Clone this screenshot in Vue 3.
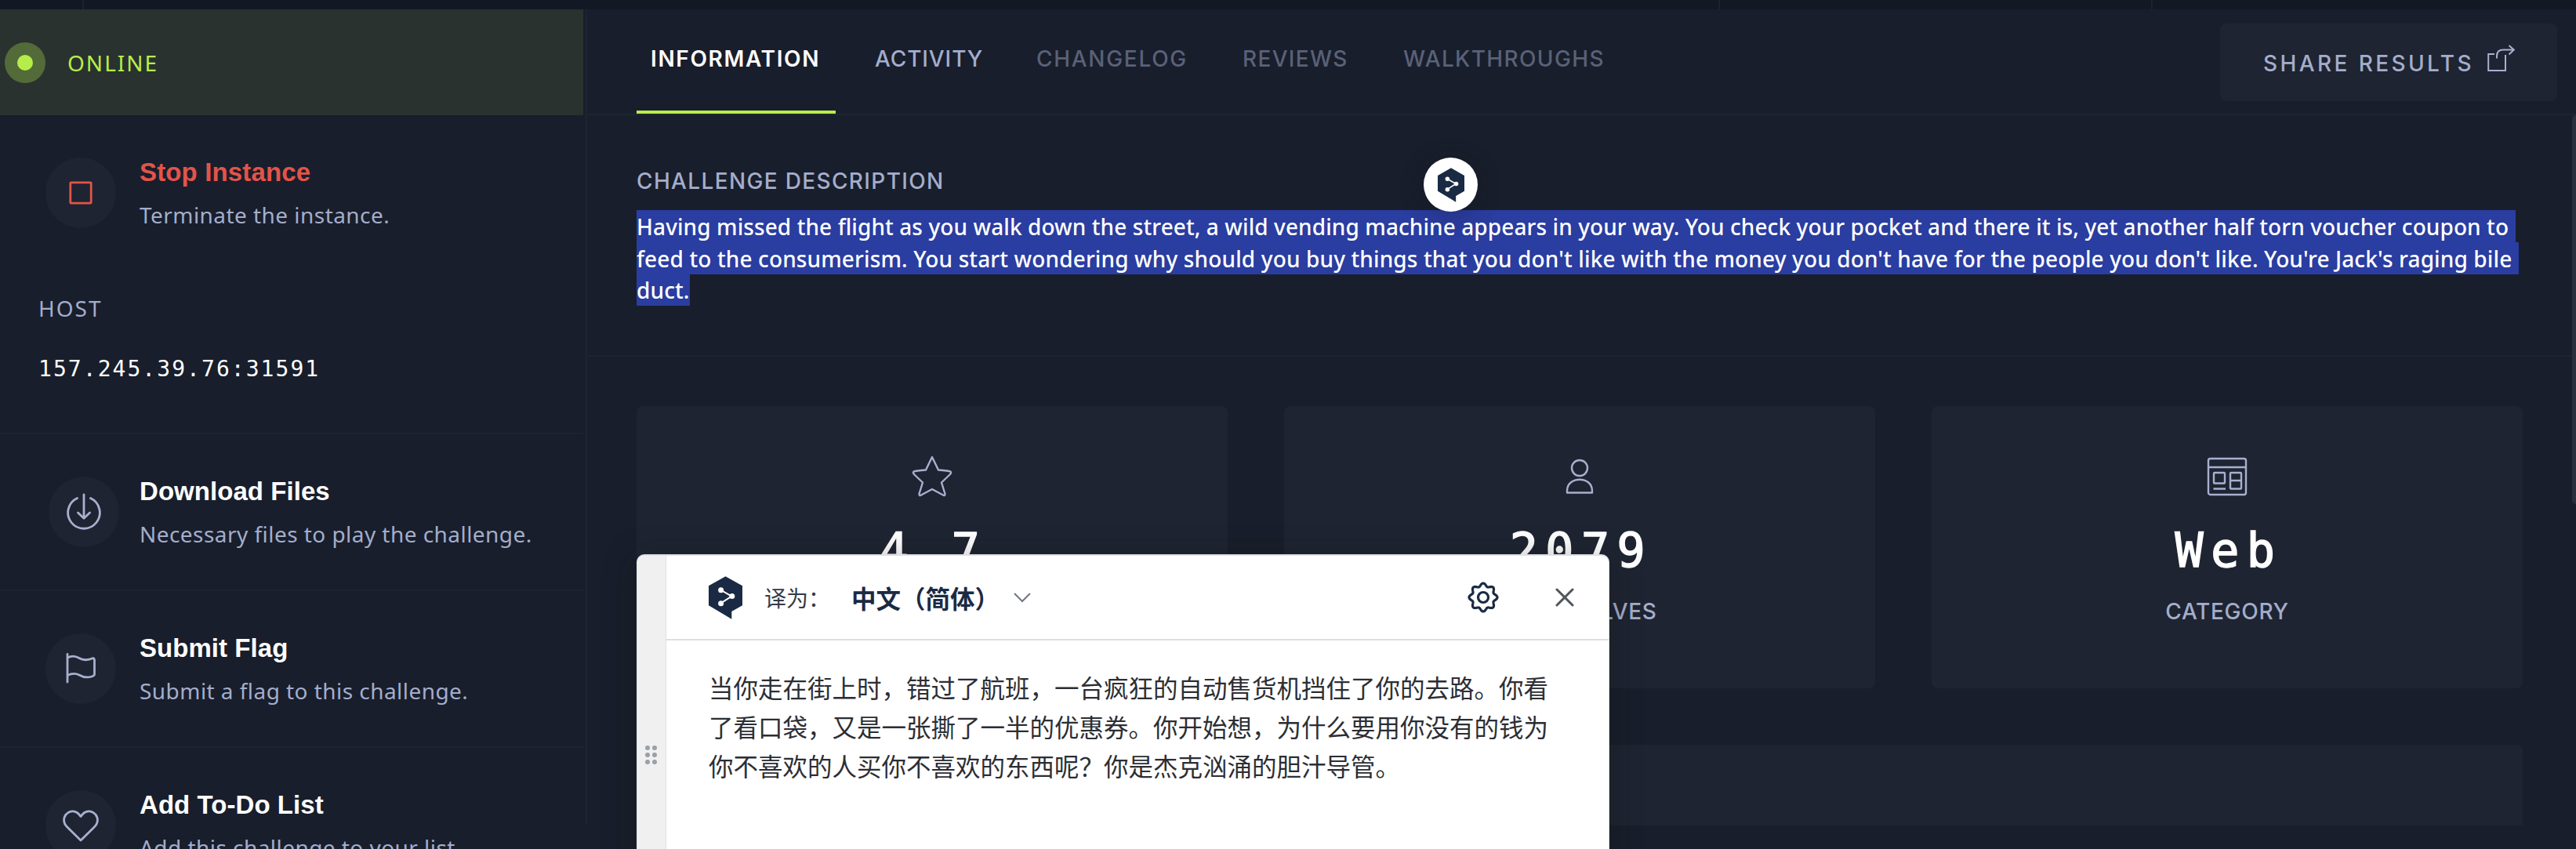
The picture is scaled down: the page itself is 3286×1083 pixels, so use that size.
<script setup>
const tabs = [
  { label: 'INFORMATION', cls: 'active' },
  { label: 'ACTIVITY', cls: 'normal' },
  { label: 'CHANGELOG', cls: 'muted changelog' },
  { label: 'REVIEWS', cls: 'muted reviews' },
  { label: 'WALKTHROUGHS', cls: 'muted' },
]
const actions = [
  { id: 'download', title: 'Download Files', text: 'Necessary files to play the challenge.' },
  { id: 'flag', title: 'Submit Flag', text: 'Submit a flag to this challenge.' },
  { id: 'todo', title: 'Add To-Do List', text: 'Add this challenge to your list.' },
]
const lines = [
  'Having missed the flight as you walk down the street, a wild vending machine appears in your way. You check your pocket and there it is, yet another half torn voucher coupon to',
  "feed to the consumerism. You start wondering why should you buy things that you don't like with the money you don't have for the people you don't like. You're Jack's raging bile",
  'duct.',
]
const translated = [
  '当你走在街上时，错过了航班，一台疯狂的自动售货机挡住了你的去路。你看',
  '了看口袋，又是一张撕了一半的优惠券。你开始想，为什么要用你没有的钱为',
  '你不喜欢的人买你不喜欢的东西呢？你是杰克汹涌的胆汁导管。',
]

// Eight-lobed cog outline, sampled in polar coordinates
const steps = 144
const gear = Array.from({ length: steps }, (_, i) => {
  const a = (i / steps) * Math.PI * 2
  const r = 16.1 + 1.9 * Math.cos(8 * a)
  return `${(20 + r * Math.cos(a)).toFixed(2)} ${(20 + r * Math.sin(a)).toFixed(2)}`
}).join('L')
const gearPath = `M${gear}Z`
</script>

<template>
  <div class="page">
    <div class="topbar"><i class="t1"></i><i class="t2"></i><i class="t3"></i></div>
    <div class="body">
      <aside class="side">
        <div class="online"><span class="dot"><b></b></span><span class="online-text">ONLINE</span></div>
        <div class="action stop">
          <div class="circle">
            <svg width="30" height="30" viewBox="0 0 30 30"><rect x="1.8" y="1.8" width="26.4" height="26.4" rx="1" fill="none" stroke="#e2544a" stroke-width="2.8" /></svg>
          </div>
          <div class="words"><h3>Stop Instance</h3><p>Terminate the instance.</p></div>
        </div>
        <div class="host"><div class="host-label">HOST</div><div class="ip">157.245.39.76:31591</div></div>
        <div v-for="a in actions" :key="a.id" class="action" :class="a.id">
          <div class="circle">
            <svg v-if="a.id === 'download'" width="46" height="48" viewBox="0 0 46 48"><path d="M14.5 6.5A20.3 20.3 0 1 0 31.5 6.5M23 2V32M15.5 25L23 32.2L30.5 25" /></svg>
            <svg v-else-if="a.id === 'flag'" width="40" height="42" viewBox="0 0 40 42"><path d="M3 2.5V38M3 7C8 4.500 13 4.500 18 7.500C24 11 29 10.500 36 7.500Q37.500 8 37.500 10V28Q37.500 30 34 31C28 33 24 32.500 18 29C13 26.500 8 27 3 29.500" /></svg>
            <svg v-else width="46" height="42" viewBox="0 0 46 42"><path d="M23 9.5L20.5 6.5C12 -2.5 -2.5 7 2.700 19Q3.800 21 6 23.200L23 40L40 23.200Q42.200 21 43.300 19C48.500 7 34 -2.500 25.500 6.500Z" /></svg>
          </div>
          <div class="words"><h3>{{ a.title }}</h3><p>{{ a.text }}</p></div>
        </div>
      </aside>
      <main class="main">
        <header class="tabs">
          <div v-for="t in tabs" :key="t.label" class="tab" :class="t.cls">{{ t.label }}</div>
          <button class="share"><span>SHARE RESULTS</span>
            <svg width="36" height="36" viewBox="0 0 36 36"><path d="M9 12H1.200V33H23V13M12 17.500V14.500C12 9.500 15 6.500 20 6.500H33.500M27.500 1L33.800 6.500L27.500 12.500" /></svg>
          </button>
        </header>
        <section class="desc">
          <h2>CHALLENGE DESCRIPTION</h2>
          <div class="selected"><div v-for="(l, i) in lines" :key="i"><span :class="'line' + i">{{ l }}</span></div></div>
        </section>
        <section class="cards">
          <div class="card">
            <svg width="52" height="54" viewBox="0 0 52 54"><path d="M26 3L34 19.500Q47 20.500 49.500 21.500Q51 23 48.500 25.500L38 35.500L42.500 50Q42.500 53 40 51.500L26 44L12 51.500Q9.500 53 9.500 50L14 35.500L3.500 25.500Q1 23 2.500 21.500Q5 20.500 18 19.500Z" /></svg>
            <div class="value">4.7</div>
          </div>
          <div class="card">
            <svg width="52" height="54" viewBox="0 0 52 54"><circle cx="26" cy="17" r="10" /><path d="M10 48.500V46C10 27 42 27 42 46V48.500Z" /></svg>
            <div class="value">2079</div><div class="label">USER SOLVES</div>
          </div>
          <div class="card">
            <svg width="52" height="54" viewBox="0 0 52 54"><rect x="2" y="5" width="48" height="46" rx="2.5" /><path d="M2 16H50M8.500 43.500H24M29.500 33H44" /><rect x="9" y="23" width="14" height="13.500" rx="1" /><rect x="30" y="23" width="14" height="20.500" rx="1" /></svg>
            <div class="value">Web</div><div class="label">CATEGORY</div>
          </div>
        </section>
        <div class="nextcard"></div>
        <div class="thumb"></div>
      </main>
    </div>

    <div class="bubble">
      <svg width="34" height="44" viewBox="0 0 44 56"><path class="hex" d="M22 0L44 12.500V38L30 46V56L0 38V12.500Z" /><path class="ln" d="M16 18L30 26L16 35" /><circle cx="16" cy="18" r="3.600" /><circle cx="30.500" cy="26" r="3.600" /><circle cx="16" cy="35.500" r="3.600" /></svg>
    </div>

    <div class="panel">
      <div class="grip"><div class="dots"><i v-for="n in 6" :key="n"></i></div></div>
      <div class="pmain">
        <div class="phead">
          <svg class="logo" width="43" height="55" viewBox="0 0 44 56"><path class="hex" d="M22 0L44 12.500V38L30 46V56L0 38V12.500Z" /><path class="ln" d="M16 18L30 26L16 35" /><circle cx="16" cy="18" r="3.600" /><circle cx="30.500" cy="26" r="3.600" /><circle cx="16" cy="35.500" r="3.600" /></svg>
          <span class="to">译为：</span>
          <span class="lang">中文（简体）</span>
          <svg class="chev" width="24" height="14" viewBox="0 0 24 14"><path d="M2 2L12 12L22 2" fill="none" stroke="#6f7680" stroke-width="2" /></svg>
          <svg class="gear" width="40" height="40" viewBox="0 0 40 40"><path :d="gearPath" /><circle cx="20" cy="20" r="6.5" /></svg>
          <svg class="close" width="24" height="24" viewBox="0 0 24 24"><path d="M2 2L22 22M22 2L2 22" stroke="#50555c" stroke-width="3" stroke-linecap="round" /></svg>
        </div>
        <div class="ptext"><div v-for="l in translated" :key="l">{{ l }}</div></div>
      </div>
    </div>
  </div>
</template>

<style>
body { margin: 0; background: #181e2b; }
</style>
<style scoped>
* { box-sizing: border-box; }
h2, h3, p { margin: 0; }
.page { position: relative; width: 3286px; height: 1083px; overflow: hidden; background: #181e2b; font-family: "Noto Sans", sans-serif; font-size: 28px; color: #a4adcb; white-space: nowrap; }
.topbar { display: flex; height: 12px; background: #131924; }
.topbar i { width: 2px; height: 12px; background: #1c222e; }
.t1 { margin-left: 105px; }
.t2 { margin-left: 2085px; }
.t3 { margin-left: 550px; }
.body { display: flex; height: 1071px; }
.side { width: 744px; flex: none; }
.online { height: 135px; background: #29322f; display: flex; align-items: center; padding-left: 6px; }
.dot { width: 52px; height: 52px; border-radius: 50%; background: #536b38; display: flex; align-items: center; justify-content: center; }
.dot b { width: 20px; height: 20px; border-radius: 50%; background: #b7ed4b; }
.online-text { color: #b7ed4b; margin-left: 28px; letter-spacing: 2px; }
.action { height: 200px; display: flex; border-bottom: 2px solid #1d2431; padding: 54px 0 0 58px; }
.action.download { padding-left: 62px; }
.action.download .words { margin-left: 26px; }
.action.stop { border: 0; height: 208px; }
.circle { width: 90px; height: 90px; flex: none; border-radius: 50%; background: #1e2431; display: flex; align-items: center; justify-content: center; }
.download svg, .flag svg, .todo svg { fill: none; stroke: #a8b0cf; stroke-width: 2.8; stroke-linecap: round; stroke-linejoin: round; }
.words { margin-left: 30px; }
h3 { font: 700 33px/40px "Liberation Sans", sans-serif; color: #fff; margin-top: -1px; letter-spacing: 0.05px; }
.stop h3 { color: #e2544a; letter-spacing: 0.15px; }
.words p { line-height: 40px; margin-top: 14px; letter-spacing: 0.45px; }
.host { height: 199px; border-bottom: 2px solid #1d2431; padding-left: 49px; }
.host-label { line-height: 40px; padding-top: 18px; letter-spacing: 2px; }
.ip { font: 28px/40px "DejaVu Sans Mono", monospace; letter-spacing: 2.05px; color: #fff; margin-top: 38px; }
.main { width: 2539px; flex: none; margin-left: 3px; position: relative; }
.main::before { content: ""; position: absolute; left: 0; top: 0; width: 2px; height: 1040px; background: #1d2431; }
.tabs { height: 135px; border-bottom: 2px solid #1e2532; display: flex; padding-left: 65px; font: 500 28px/40px Inter, sans-serif; }
.tab { height: 133px; padding-top: 43px; margin-right: 50px; flex: none; }
.active { width: 254px; padding-left: 18px; border-bottom: 4px solid #b7ed4b; color: #fff; font-weight: 600; letter-spacing: 1.65px; }
.normal { width: 156px; letter-spacing: 0.9px; }
.muted { color: #5a6178; letter-spacing: 1.35px; }
.changelog { width: 213px; letter-spacing: 1.7px; }
.reviews { width: 155px; letter-spacing: 1.3px; }
.share { margin: 18px 24px 0 auto; width: 430px; height: 99px; border: 0; border-radius: 8px; background: #1e2431; color: #a4adcb; display: flex; padding: 0; }
.share span { margin: 31px 0 0 55px; font: 500 28px/40px Inter, sans-serif; letter-spacing: 3.4px; }
.share svg { margin: 27px 0 0 17px; fill: none; stroke: #a8b0cf; stroke-width: 2; }
.desc { height: 308px; border-bottom: 2px solid #1d2431; padding: 64px 0 0 65px; }
h2 { font: 500 28px/40px Inter, sans-serif; letter-spacing: 1.35px; }
.selected { margin-top: 17px; color: #fff; font-weight: 500; }
.selected div { height: 40.7px; }
.selected span { display: inline-block; height: 41px; line-height: 43px; background: #2a3da0; padding-right: 9px; }
.line0 { letter-spacing: 0.085px; }
.line1 { letter-spacing: 0.125px; }
.selected .line2 { letter-spacing: 0.11px; padding-right: 0; }
.cards { display: flex; gap: 72px; padding: 63px 0 0 65px; }
.card { width: 754px; height: 360px; background: #1e2431; border-radius: 8px; display: flex; flex-direction: column; align-items: center; }
.card svg { margin-top: 62px; fill: none; stroke: #a8b0cf; stroke-width: 2.4; stroke-linejoin: round; flex: none; }
.value { font: 60px/70px "DejaVu Sans Mono", monospace; color: #fff; letter-spacing: 9.5px; margin-top: 33px; padding-left: 4px; -webkit-text-stroke: 1.5px #fff; }
.label { font: 500 28px/40px Inter, sans-serif; letter-spacing: 0.7px; margin-top: 23px; }
.nextcard { margin: 72px 0 0 65px; width: 2406px; height: 103px; background: #1e2431; border-radius: 8px 8px 0 0; }
.thumb { position: absolute; right: 0; top: 135px; width: 5px; height: 496px; border-radius: 5px 0 0 5px; background: #2b303d; }
.bubble { position: absolute; left: 1816px; top: 201px; width: 69px; height: 69px; border-radius: 50%; background: #fff; display: flex; align-items: center; justify-content: center; box-shadow: 0 4px 30px rgba(20, 20, 30, 0.3); }
.hex { fill: #1b2a44; }
.ln { fill: none; stroke: #fff; stroke-width: 2; }
.bubble circle, .logo circle { fill: #fff; }
.panel { position: absolute; left: 812px; top: 707px; width: 1241px; height: 500px; background: #fff; border: 2px solid #dce0e6; border-right-width: 1px; border-left-width: 1px; border-radius: 10px; overflow: hidden; display: flex; box-shadow: 0 6px 40px rgba(20, 20, 20, 0.35); }
.grip { width: 37px; background: #f0f0f0; border-right: 1px solid #dce0e6; padding: 242px 0 0 10px; }
.dots { display: grid; grid-template-columns: 6px 6px; gap: 3px; }
.dots i { width: 6px; height: 6px; border-radius: 50%; background: #99a0a8; }
.pmain { flex: 1; font-family: "Noto Sans CJK SC", sans-serif; }
.phead { height: 108px; border-bottom: 2px solid #dce0e6; display: flex; align-items: center; padding-left: 54px; color: #1b2a44; }
.to { font-size: 28px; color: #333b48; margin-left: 28px; width: 84px; }
.lang { font-size: 31.5px; font-weight: 700; margin-left: 27px; width: 189px; }
.chev { margin-left: 17px; }
.gear { margin-left: 556px; fill: none; stroke: #1b2a44; stroke-width: 3.2; stroke-linejoin: round; }
.close { margin-left: 72px; }
.ptext { padding: 34px 0 0 54px; font-size: 31.5px; line-height: 50px; color: #2c2e34; }
</style>
